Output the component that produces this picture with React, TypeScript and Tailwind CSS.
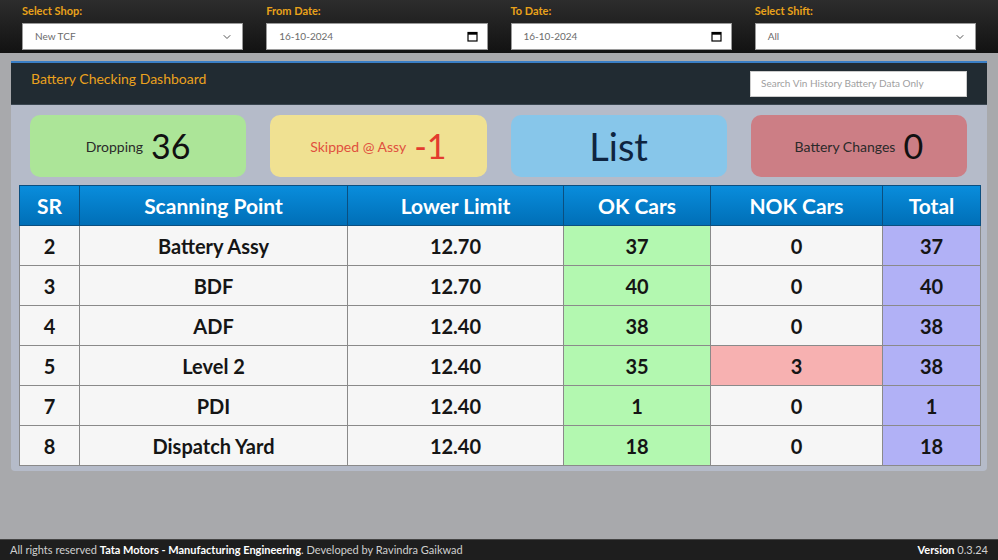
import { ChevronDown } from "lucide-react";

const rows = [
  { sr: 2, point: "Battery Assy", limit: "12.70", ok: 37, nok: 0, total: 37 },
  { sr: 3, point: "BDF", limit: "12.70", ok: 40, nok: 0, total: 40 },
  { sr: 4, point: "ADF", limit: "12.40", ok: 38, nok: 0, total: 38 },
  { sr: 5, point: "Level 2", limit: "12.40", ok: 35, nok: 3, total: 38 },
  { sr: 7, point: "PDI", limit: "12.40", ok: 1, nok: 0, total: 1 },
  { sr: 8, point: "Dispatch Yard", limit: "12.40", ok: 18, nok: 0, total: 18 },
];

function CalendarIcon() {
  return (
    <svg width="11" height="11" viewBox="0 0 11 11" className="text-black">
      <rect x="1" y="1.5" width="9" height="8.5" fill="none" stroke="currentColor" strokeWidth="1.2" />
      <rect x="1" y="1.5" width="9" height="2.2" fill="currentColor" />
    </svg>
  );
}

function Field({ label, value, kind }: { label: string; value: string; kind: "select" | "date" }) {
  return (
    <div className="flex flex-col">
      <label className="text-[11px] font-bold text-[#e9a21a] leading-none mb-[7px] mt-[5px]">{label}</label>
      <div className="h-[27px] bg-white border border-[#9a9a9a] flex items-center justify-between pl-[12px] pr-[9px] text-[10px] text-[#6b6b6b]">
        <span>{value}</span>
        {kind === "select" ? <ChevronDown size={12} strokeWidth={2} className="text-[#555]" /> : <CalendarIcon />}
      </div>
    </div>
  );
}

function Card({ bg, children }: { bg: string; children: React.ReactNode }) {
  return (
    <div className={`h-[62px] rounded-[10px] flex items-center justify-center gap-[8px] ${bg}`}>{children}</div>
  );
}

export default function App() {
  return (
    <div
      className="w-[998px] h-[560px] bg-[#a8a9ac] flex flex-col overflow-hidden"
      style={{ fontFamily: "Lato, 'Open Sans', sans-serif" }}
    >
      <div className="h-[53px] bg-gradient-to-b from-[#2d2d2d] to-[#121212] grid grid-cols-4 gap-x-[23px] px-[22px]">
        <Field label="Select Shop:" value="New TCF" kind="select" />
        <Field label="From Date:" value="16-10-2024" kind="date" />
        <Field label="To Date:" value="16-10-2024" kind="date" />
        <Field label="Select Shift:" value="All" kind="select" />
      </div>

      <div className="mx-[11px] mt-[8px] h-[410px] bg-[#b5bbc9] rounded-b-[4px] border-t-[2px] border-[#3a7fc6] flex flex-col">
        <div className="h-[42px] bg-[#212b32] flex items-center justify-between pl-[20px] pr-[20px] border-b border-[#3a4650]">
          <span className="text-[14px] text-[#eba21e] -mt-[11px]">Battery Checking Dashboard</span>
          <div className="w-[217px] h-[26px] bg-white border border-[#ccc] flex items-center px-[10px] text-[10px] text-[#a0a0a0]">
            Search Vin History Battery Data Only
          </div>
        </div>

        <div className="grid grid-cols-4 gap-x-[24px] px-[19px] pr-[20px] mt-[10px]">
          <Card bg="bg-[#ace598]">
            <span className="text-[14px] text-[#2a2a2a]">Dropping</span>
            <span className="text-[34px] text-[#111] leading-none">36</span>
          </Card>
          <Card bg="bg-[#f0e192]">
            <span className="text-[14px] text-[#e0503e]">Skipped @ Assy</span>
            <span className="text-[34px] text-[#e33b2e] leading-none">-1</span>
          </Card>
          <Card bg="bg-[#87c6ea]">
            <span className="text-[38px] text-[#0e2440] leading-none">List</span>
          </Card>
          <Card bg="bg-[#cc7e85]">
            <span className="text-[14px] text-[#2a2a2a]">Battery Changes</span>
            <span className="text-[34px] text-[#111] leading-none">0</span>
          </Card>
        </div>

        <div className="px-[8px] mt-[8px]">
          <table className="w-full border-collapse table-fixed">
            <colgroup>
              <col className="w-[60px]" />
              <col className="w-[268px]" />
              <col className="w-[216px]" />
              <col className="w-[147px]" />
              <col className="w-[172px]" />
              <col className="w-[98px]" />
            </colgroup>
            <thead>
              <tr className="h-[40px] bg-gradient-to-b from-[#0a8ddc] to-[#006eb6]">
                {["SR", "Scanning Point", "Lower Limit", "OK Cars", "NOK Cars", "Total"].map((h) => (
                  <th key={h} className="border border-[#0b4f80] text-white text-[21px] font-bold">
                    {h}
                  </th>
                ))}
              </tr>
            </thead>
            <tbody>
              {rows.map((r) => (
                <tr key={r.sr} className="h-[40px] text-[20px] font-bold text-[#151515] text-center">
                  <td className="border border-[#8a8a8a] bg-[#f6f6f6]">{r.sr}</td>
                  <td className="border border-[#8a8a8a] bg-[#f6f6f6]">{r.point}</td>
                  <td className="border border-[#8a8a8a] bg-[#f6f6f6]">{r.limit}</td>
                  <td className="border border-[#8a8a8a] bg-[#b3f8b0]">{r.ok}</td>
                  <td className={`border border-[#8a8a8a] ${r.nok > 0 ? "bg-[#f7b1b1]" : "bg-[#f6f6f6]"}`}>{r.nok}</td>
                  <td className="border border-[#8a8a8a] bg-[#b1b1f6]">{r.total}</td>
                </tr>
              ))}
            </tbody>
          </table>
        </div>
      </div>

      <div className="flex-1" />

      <div className="h-[21px] bg-[#1e1e1e] border-t border-[#444] flex items-center justify-between px-[10px] text-[11px] text-[#cfcfcf]">
        <span>
          All rights reserved <b className="text-white">Tata Motors - Manufacturing Engineering</b>. Developed by Ravindra Gaikwad
        </span>
        <span>
          <b className="text-white">Version</b> 0.3.24
        </span>
      </div>
    </div>
  );
}
